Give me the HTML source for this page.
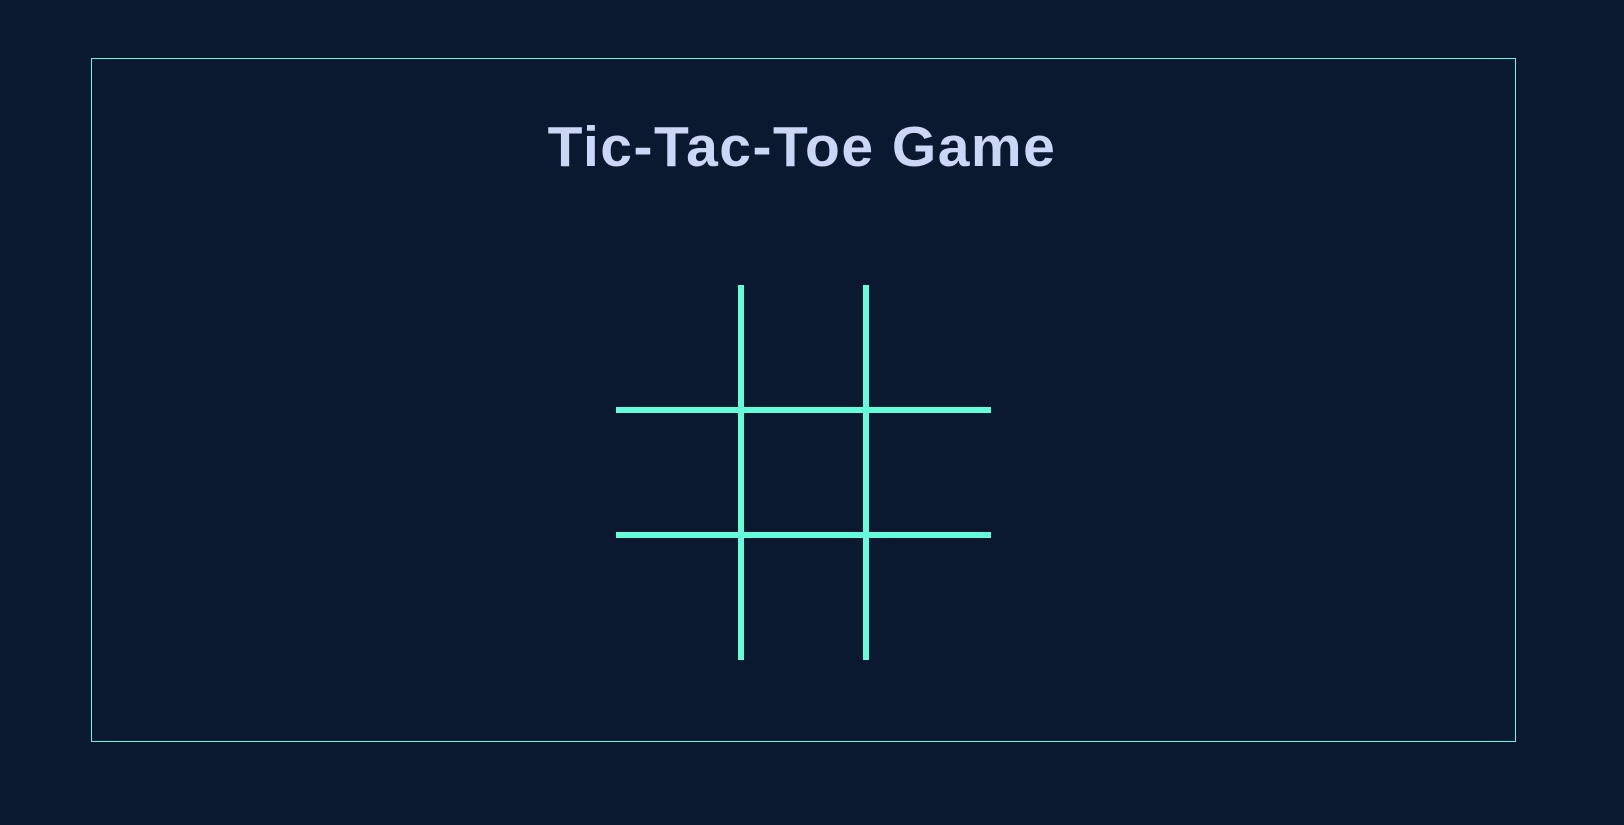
<!DOCTYPE html>
<html><head><style>
html,body{margin:0;padding:0;background:#0a192f;width:1624px;height:825px;overflow:hidden}
.box{position:absolute;left:91px;top:58px;width:1425px;height:684px;border:1px solid #64ffda;box-sizing:border-box}
h1{position:absolute;left:-10px;width:1624px;top:112px;margin:0;text-align:center;font-family:"Liberation Sans",sans-serif;font-weight:bold;letter-spacing:1.5px;font-size:57px;line-height:70px;color:#ccd6f6}
.l{position:absolute;background:#64ffda}
</style></head><body>
<div class="box"></div>
<h1>Tic-Tac-Toe Game</h1>
<div class="l" style="left:738px;top:285px;width:6px;height:375px"></div>
<div class="l" style="left:863px;top:285px;width:6px;height:375px"></div>
<div class="l" style="left:616px;top:407px;width:375px;height:6px"></div>
<div class="l" style="left:616px;top:532px;width:375px;height:6px"></div>
</body></html>
